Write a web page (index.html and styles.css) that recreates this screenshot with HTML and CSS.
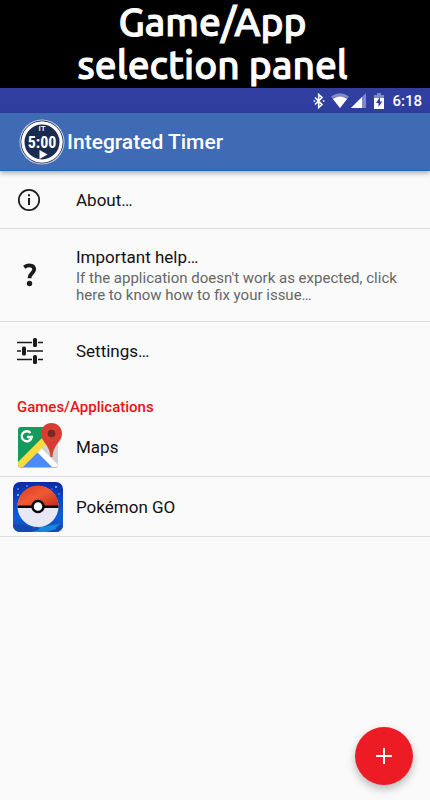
FILE: index.html
```html
<!DOCTYPE html>
<html lang="en">
<head>
<meta charset="utf-8">
<meta name="viewport" content="width=device-width, initial-scale=1">
<title>Integrated Timer</title>
<link rel="stylesheet" href="styles.css">
</head>
<body>
<h1 class="banner">Game/App<br>selection panel</h1>
<div class="status">
  <svg class="bluetooth" width="12" height="16" viewBox="0 0 12 16" fill="none" stroke="#fff" stroke-width="1.6"><path d="M2 4.500l7 7-3.300 3V1.500L9 4.500l-7 7"/><path d="M.6 8h1.600M9.800 8h1.600"/></svg>
  <svg class="wifi" width="18" height="15" viewBox="0 0 18 15"><path fill="#7f88c8" d="M9 15L0 3.500Q9-3 18 3.500z"/><path fill="#fff" d="M9 15L2 6Q9 1 16 6z"/></svg>
  <svg class="signal" width="15" height="15" viewBox="0 0 15 15"><path fill="#7f88c8" d="M0 15L15 0v15z"/><path fill="#fff" d="M0 15L11 4v11z"/></svg>
  <svg class="battery" width="10" height="16" viewBox="0 0 10 16"><path fill="#7f88c8" d="M3 0h4v2h3v4H0V2h3z"/><path fill="#fff" d="M0 5h10v11H0z"/><path fill="#303f9f" d="M6 4L2 10h2.500v4L8.300 8.500H6z"/></svg>
  <time>6:18</time>
</div>
<header class="toolbar">
  <svg width="46" height="46" viewBox="0 0 46 46" aria-hidden="true">
    <circle cx="23" cy="23" r="22.500" fill="#c9d3e5"/>
    <circle cx="23" cy="23" r="21" fill="none" stroke="#1d2b50" stroke-width="1"/>
    <circle cx="23" cy="23" r="19" fill="#1a2b52" stroke="#fff" stroke-width="3"/>
    <text class="logo-small" x="23" y="12" text-anchor="middle">IT</text>
    <text class="logo-time" x="23" y="29" text-anchor="middle">5:00</text>
    <path fill="#fff" d="M20.500 31l8 4.500-8 4.500z"/>
  </svg>
  <h2>Integrated Timer</h2>
</header>
<main>
  <a class="row" href="#about">
    <span class="icon"><svg width="24" height="24" viewBox="0 0 24 24"><circle cx="12" cy="12" r="10.200" fill="none" stroke="#1b1b1b" stroke-width="1.700"/><path fill="#1b1b1b" d="M11 6.300h2v2h-2zM11 10h2v7h-2z"/></svg></span>
    <span class="title">About…</span>
  </a>
  <a class="row help" href="#help">
    <span class="icon"><svg width="14" height="24" viewBox="0 0 14 24"><path fill="none" stroke="#1b1b1b" stroke-width="3.800" d="M1.200 4.300C5 1.500 11.200 1.700 11.200 6.300c0 4-4.700 3.700-4.700 8.900"/><circle cx="6.500" cy="20.500" r="2.700" fill="#1b1b1b"/></svg></span>
    <span class="copy"><span class="title">Important help…</span><span class="detail">If the application doesn't work as expected, click here to know how to fix your issue…</span></span>
  </a>
  <a class="row plain" href="#settings">
    <span class="icon"><svg width="26" height="28" viewBox="0 0 26 28"><path fill="none" stroke="#1b1b1b" stroke-width="1.700" d="M0 5.500h15M21 5.500h5M0 14h4M10 14h16M0 22.500h15M21 22.500h5"/><g fill="#1b1b1b"><rect x="16" y="1" width="4" height="9" rx="1.500"/><rect x="5" y="9.500" width="4" height="9" rx="1.500"/><rect x="16" y="18" width="4" height="9" rx="1.500"/></g></svg></span>
    <span class="title">Settings…</span>
  </a>
  <h3>Games/Applications</h3>
  <a class="row app" href="#maps">
    <span class="icon"><svg width="50" height="50" viewBox="0 0 50 50">
      <defs><clipPath id="map"><rect x="5" y="5" width="40" height="40" rx="3"/></clipPath></defs>
      <rect x="5" y="6" width="40" height="40" rx="3" fill="#b9bcbb"/>
      <g clip-path="url(#map)"><path fill="#149a5b" d="M5 5h40L5 45z"/><path fill="#d0d1d3" d="M45 5v40L25 25z"/><path fill="#4c8bf5" d="M3 50l21-21 21 21z"/><path fill="#fff" d="M21 27l4-4 24 24h-8z"/><path fill="#fdda3b" d="M3 42L37 8l5 5L8 47H3z"/></g>
      <path fill="none" stroke="#fff" stroke-width="2.400" d="M17.500 11a5 5 0 1 0 1.200 4H14"/>
      <path fill="#d73d32" d="M38.500 1C32.500 1 28 5.500 28 11.500c0 9 8.500 10 9.500 23.500h2c1-13.500 9.500-14.500 9.500-23.500C49 5.500 44.500 1 38.500 1z"/><circle cx="38.500" cy="11.500" r="3.800" fill="#742b23"/>
    </svg></span>
    <span class="title">Maps</span>
  </a>
  <a class="row app" href="#pokemon-go">
    <span class="icon"><svg width="50" height="50" viewBox="0 0 50 50">
      <defs><linearGradient id="sky" x2="0" y2="1"><stop stop-color="#0a2ba6"/><stop offset=".7" stop-color="#0a5fd6"/><stop offset="1" stop-color="#1449b4"/></linearGradient><linearGradient id="ball" x2="1" y2="1"><stop stop-color="#d93a20"/><stop offset=".5" stop-color="#f05a35"/><stop offset="1" stop-color="#c32a18"/></linearGradient><clipPath id="tile"><rect width="50" height="50" rx="7"/></clipPath></defs>
      <g clip-path="url(#tile)"><rect width="50" height="50" fill="url(#sky)"/><path fill="#1489dc" d="M24 45q14-1 24-4-6 4-5 6l-10 3H18q13-3 6-5z"/><path fill="#1745b1" d="M0 43q14-1 19 3l-9 4H0zM50 43q-8 2-6 7h6z"/><g fill="#8fc0f0"><circle cx="5" cy="7" r=".8"/><circle cx="14" cy="4" r=".8"/><circle cx="5" cy="13" r="1.100"/><circle cx="43" cy="5" r="1"/><circle cx="46" cy="12" r=".7"/><circle cx="39" cy="7" r=".6"/></g></g>
      <circle cx="25" cy="24.500" r="20.500" fill="#e7e8f3"/><path fill="url(#ball)" d="M4.500 24a20.500 20.500 0 0 1 41 0z"/><path fill="#080a0e" d="M4.500 23.500h41v2.500h-41z"/><circle cx="25" cy="24.500" r="5.500" fill="#fff" stroke="#080a0e" stroke-width="2.500"/>
    </svg></span>
    <span class="title">Pokémon GO</span>
  </a>
</main>
<button class="add" type="button" aria-label="Add application"><svg width="16" height="16" viewBox="0 0 16 16"><path fill="none" stroke="#fff" stroke-width="2" d="M8 0v16M0 8h16"/></svg></button>
</body>
</html>
```
FILE: styles.css
```css
* { box-sizing: border-box; }
body {
  margin: 0;
  min-height: 100vh;
  background: #fafafa;
  color: #111;
  font-family: Roboto, "Liberation Sans", sans-serif;
}
svg { display: block; flex: none; }
h1, h2, h3 { margin: 0; }
.banner {
  height: 88px;
  padding-right: 5px;
  background: #000;
  color: #fff;
  font: 500 39px/43px Ubuntu, "Noto Sans", sans-serif;
  -webkit-text-stroke: 1px #fff;
  text-align: center;
}
.status {
  display: flex;
  align-items: center;
  justify-content: flex-end;
  height: 25px;
  padding-right: 8px;
  background: #303f9f;
  color: #fff;
  font-size: 15px;
  font-weight: 500;
}
.bluetooth { margin-right: 6px; }
.wifi { margin-right: 2px; }
.signal { margin-right: 8px; }
.battery { margin-right: 8px; }
.toolbar {
  display: flex;
  align-items: center;
  gap: 2px;
  height: 58px;
  padding-left: 19px;
  background: #3f6bb5;
  border-bottom: 1px solid #2464bb;
  box-shadow: 0 2px 5px #0005;
  color: #fff;
}
.toolbar h2 { font-size: 21px; font-weight: 500; line-height: 24px; }
.logo-small { fill: #fff; font: 500 8px Roboto, sans-serif; }
.logo-time { fill: #fff; font: 700 16px "Roboto Condensed", Roboto, sans-serif; }
.row {
  display: flex;
  align-items: center;
  min-height: 58px;
  padding-right: 32px;
  border-bottom: 1px solid #dedede;
  color: inherit;
  text-decoration: none;
}
.icon {
  display: flex;
  flex: none;
  justify-content: center;
  width: 60px;
  margin-right: 16px;
}
.title { font-size: 17px; line-height: 20px; }
.copy { display: flex; flex-direction: column; gap: 3px; }
.detail { color: #666; font-size: 15px; line-height: 17px; }
.help { min-height: 93px; }
.plain { border-bottom: 0; }
.row:not(.app) .icon { justify-content: flex-start; padding-left: 17px; }
.help .icon svg { margin-left: 6px; }
h3 {
  padding: 17px 17px 0;
  color: #ec1019;
  font-size: 15px;
  font-weight: 500;
  line-height: 20px;
}
.app { min-height: 60px; }
.app .icon { width: 76px; margin-right: 0; }
.add {
  position: fixed;
  right: 17px;
  bottom: 15px;
  display: grid;
  place-items: center;
  width: 58px;
  height: 58px;
  padding: 0;
  border: 0;
  border-radius: 50%;
  background: #ed1c24;
  box-shadow: 0 4px 8px #0004;
}
```
